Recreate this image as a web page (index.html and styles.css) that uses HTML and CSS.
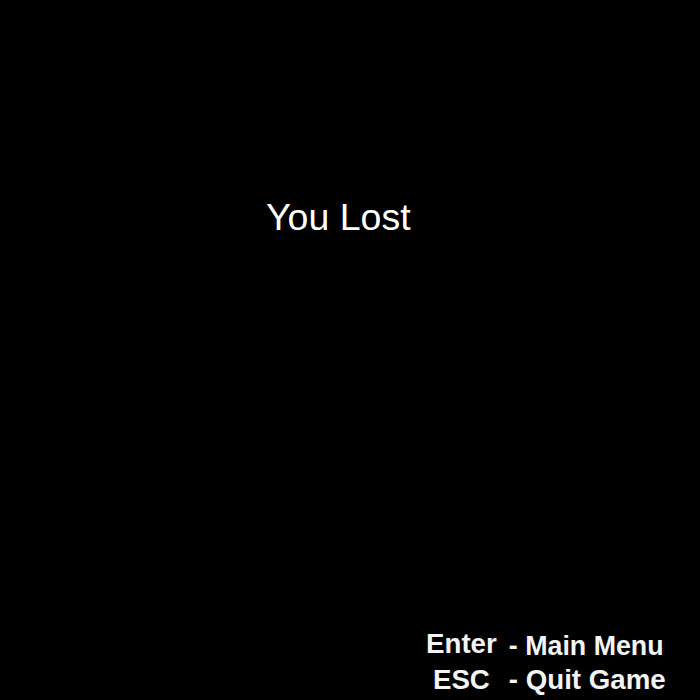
FILE: index.html
```html
<!DOCTYPE html>
<html>
<head>
<meta charset="utf-8">
<link rel="stylesheet" href="styles.css">
</head>
<body>
<main class="screen">
  <h1 class="title">You Lost</h1>
  <div class="controls">
    <span class="key key-enter">Enter</span><span class="action action-main">- Main Menu</span>
    <span class="key">ESC</span><span class="action">- Quit Game</span>
  </div>
</main>
</body>
</html>
```
FILE: styles.css
```css
html, body {
  margin: 0;
  padding: 0;
  background: #000;
}
.screen {
  width: 700px;
  height: 700px;
  box-sizing: border-box;
  display: flex;
  flex-direction: column;
  padding: 196px 0 4px 266px;
  color: #fff;
  font-family: "Liberation Sans", Arial, sans-serif;
}
.title {
  margin: 0;
  font-size: 37.5px;
  font-weight: normal;
  line-height: 42px;
}
.controls {
  margin-top: auto;
  margin-left: 160px;
  display: grid;
  grid-template-columns: auto auto;
  column-gap: 12px;
  justify-content: start;
  align-items: baseline;
  font-size: 27.7px;
  font-weight: bold;
  line-height: 33px;
  color: #f4f4f4;
}
.key {
  text-align: center;
}
.key-enter {
  position: relative;
  top: -2px;
}
.action {
  text-align: left;
}
.action-main {
  font-size: 26.8px;
}
```
